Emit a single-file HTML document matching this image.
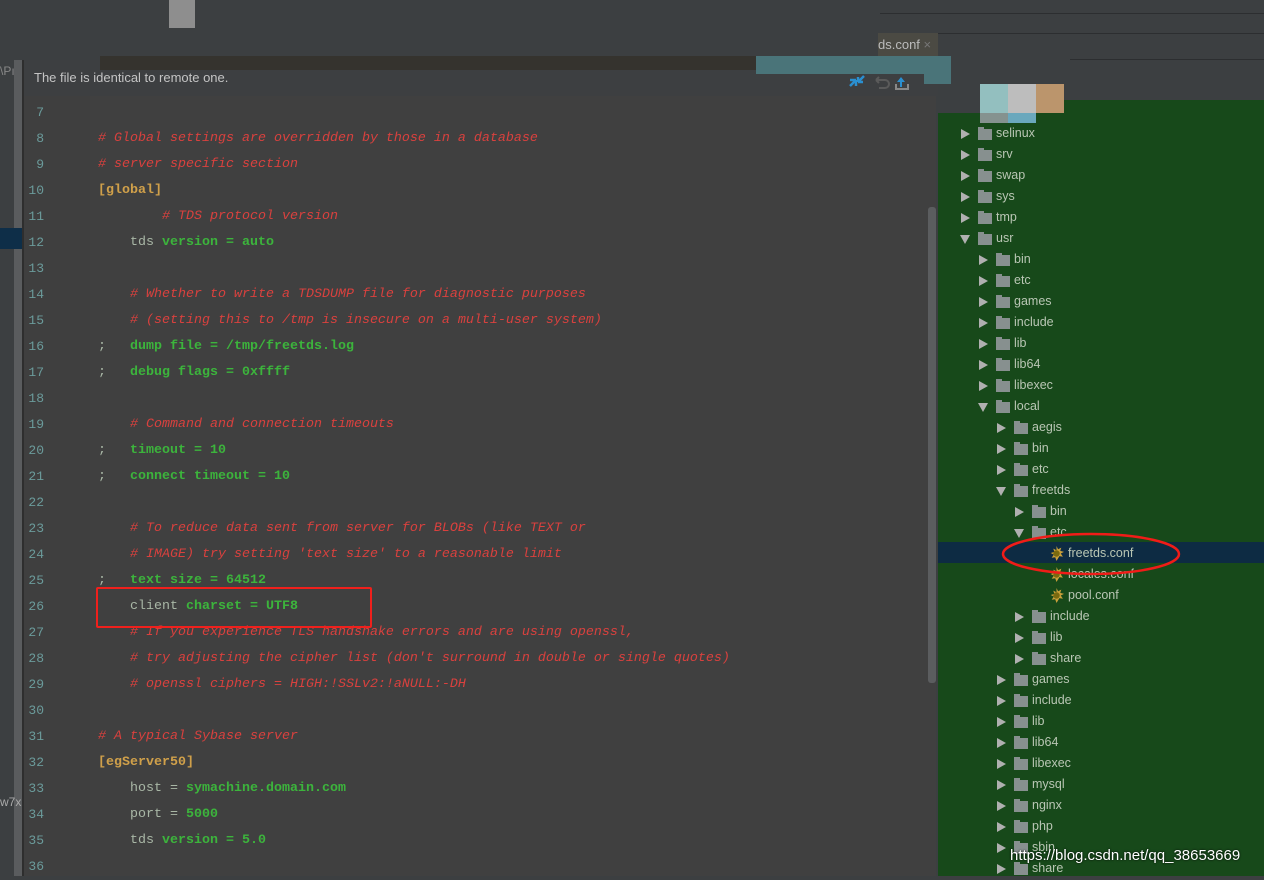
<!DOCTYPE html>
<html><head><meta charset="utf-8"><style>
body{margin:0;width:1264px;height:876px;overflow:hidden;background:#3c3f41;position:relative;font-family:"Liberation Sans",sans-serif}
.a{position:absolute}
.ln{position:absolute;left:24px;width:20px;text-align:right;font:13px "Liberation Mono",monospace;color:#6b9b9b;height:26px;line-height:26px}
.c{position:absolute;left:98px;font:13.33px "Liberation Mono",monospace;height:26px;line-height:26px;white-space:pre;color:#a9b7a6}
.r{color:#d9413e;font-style:italic}
.g{color:#3cb43c;font-weight:bold}
.k{color:#d0a04a;font-weight:bold}
.t{position:absolute;font-size:12.5px;color:#b9c6b4;height:21px;line-height:21px;white-space:nowrap}
.ar{display:inline-block;width:0;height:0;border-top:5px solid transparent;border-bottom:5px solid transparent;border-left:9px solid #b0b0b0;position:absolute;top:5px}
.ad{display:inline-block;width:0;height:0;border-left:5px solid transparent;border-right:5px solid transparent;border-top:9px solid #b0b0b0;position:absolute;top:6px}
.fo{position:absolute;top:5px;width:14px;height:11px;background:#87908f}
.fo:before{content:"";position:absolute;left:0;top:-2px;width:6px;height:2px;background:#87908f}
.gear{position:absolute;top:4px;width:15px;height:15px}
</style></head><body>
<div class="a" style="left:169px;top:0;width:26px;height:28px;background:#8e8e8e"></div>
<div class="a" style="left:880px;top:13px;width:384px;height:1px;background:#2c2e30"></div>
<div class="a" style="left:878px;top:33px;width:60px;height:24px;background:#4b4a43;color:#bbb;font-size:13px;line-height:24px">ds.conf <span style="color:#777">×</span></div>
<div class="a" style="left:938px;top:33px;width:326px;height:1px;background:#2c2e30"></div>
<div class="a" style="left:1070px;top:59px;width:194px;height:1px;background:#2c2e30"></div>
<!-- left strip -->
<div class="a" style="left:0;top:60px;width:14px;height:816px;background:#3c3f41"></div>
<div class="a" style="left:14px;top:60px;width:9px;height:816px;background:#5a5c5e"></div>
<div class="a" style="left:0;top:228px;width:23px;height:21px;background:#0e2e48"></div>
<div class="a" style="left:0;top:795px;color:#aaa;font-size:12px">w7x.</div>
<div class="a" style="left:0;top:64px;color:#888;font-size:12px">\Pı</div>
<!-- editor -->
<div class="a" style="left:24px;top:60px;width:914px;height:36px;background:#3d3f41"></div>
<div class="a" style="left:100px;top:56px;width:656px;height:14px;background:#35332e"></div>
<div class="a" style="left:756px;top:56px;width:168px;height:18px;background:#4a7479"></div>
<div class="a" style="left:924px;top:56px;width:27px;height:28px;background:#4a7479"></div>
<div class="a" style="left:34px;top:70px;color:#c4c4c4;font-size:13px">The file is identical to remote one.</div>
<svg class="a" style="left:846px;top:72px" width="70" height="20">
<path d="M4 14 L10 8 M10 8 v6 M10 8 h-6" stroke="#2a8fd0" stroke-width="2.5" fill="none"/>
<path d="M18 4 L12 10 M12 10 v-5 M12 10 h5" stroke="#2a8fd0" stroke-width="2.5" fill="none"/>
<path d="M30 8 h9 a4 4 0 0 1 0 8 h-6 M30 8 l3 -3 M30 8 l3 3" stroke="#5a5a5a" stroke-width="2" fill="none"/>
<path d="M55 5 l-4 5 h3 v5 h2 v-5 h3z" fill="#2a8fd0"/><path d="M50 12 v5 h12 v-5" stroke="#888" stroke-width="2" fill="none"/>
</svg>
<div class="a" style="left:24px;top:96px;width:914px;height:780px;background:#404040"></div>
<div class="a" style="left:24px;top:96px;width:66px;height:780px;background:#3f3f3f"></div>
<div class="a" style="left:22px;top:60px;width:2px;height:816px;background:#2e2e2e"></div>
<div class="a" style="left:928px;top:207px;width:8px;height:476px;background:#5b5d5f;border-radius:3px"></div>
<div class="a" style="left:936px;top:96px;width:2px;height:780px;background:#3c3f41"></div>
<div style="position:absolute;left:0;top:2px;width:938px;height:876px">
<div class="ln" style="top:98px">7</div>
<div class="ln" style="top:124px">8</div><div class="c r" style="top:124px"># Global settings are overridden by those in a database</div>
<div class="ln" style="top:150px">9</div><div class="c r" style="top:150px"># server specific section</div>
<div class="ln" style="top:176px">10</div><div class="c k" style="top:176px">[global]</div>
<div class="ln" style="top:202px">11</div><div class="c r" style="top:202px">        # TDS protocol version</div>
<div class="ln" style="top:228px">12</div><div class="c" style="top:228px">    tds <span class="g">version = auto</span></div>
<div class="ln" style="top:254px">13</div>
<div class="ln" style="top:280px">14</div><div class="c r" style="top:280px">    # Whether to write a TDSDUMP file for diagnostic purposes</div>
<div class="ln" style="top:306px">15</div><div class="c r" style="top:306px">    # (setting this to /tmp is insecure on a multi-user system)</div>
<div class="ln" style="top:332px">16</div><div class="c" style="top:332px">;   <span class="g">dump file = /tmp/freetds.log</span></div>
<div class="ln" style="top:358px">17</div><div class="c" style="top:358px">;   <span class="g">debug flags = 0xffff</span></div>
<div class="ln" style="top:384px">18</div>
<div class="ln" style="top:410px">19</div><div class="c r" style="top:410px">    # Command and connection timeouts</div>
<div class="ln" style="top:436px">20</div><div class="c" style="top:436px">;   <span class="g">timeout = 10</span></div>
<div class="ln" style="top:462px">21</div><div class="c" style="top:462px">;   <span class="g">connect timeout = 10</span></div>
<div class="ln" style="top:488px">22</div>
<div class="ln" style="top:514px">23</div><div class="c r" style="top:514px">    # To reduce data sent from server for BLOBs (like TEXT or</div>
<div class="ln" style="top:540px">24</div><div class="c r" style="top:540px">    # IMAGE) try setting 'text size' to a reasonable limit</div>
<div class="ln" style="top:566px">25</div><div class="c" style="top:566px">;   <span class="g">text size = 64512</span></div>
<div class="ln" style="top:592px">26</div><div class="c" style="top:592px">    client <span class="g">charset = UTF8</span></div>
<div class="ln" style="top:618px">27</div><div class="c r" style="top:618px">    # If you experience TLS handshake errors and are using openssl,</div>
<div class="ln" style="top:644px">28</div><div class="c r" style="top:644px">    # try adjusting the cipher list (don't surround in double or single quotes)</div>
<div class="ln" style="top:670px">29</div><div class="c r" style="top:670px">    # openssl ciphers = HIGH:!SSLv2:!aNULL:-DH</div>
<div class="ln" style="top:696px">30</div>
<div class="ln" style="top:722px">31</div><div class="c r" style="top:722px"># A typical Sybase server</div>
<div class="ln" style="top:748px">32</div><div class="c k" style="top:748px">[egServer50]</div>
<div class="ln" style="top:774px">33</div><div class="c" style="top:774px">    host = <span class="g">symachine.domain.com</span></div>
<div class="ln" style="top:800px">34</div><div class="c" style="top:800px">    port = <span class="g">5000</span></div>
<div class="ln" style="top:826px">35</div><div class="c" style="top:826px">    tds <span class="g">version = 5.0</span></div>
<div class="ln" style="top:852px">36</div>
</div>
<div class="a" style="left:96px;top:587px;width:272px;height:37px;border:2px solid #f0201c;border-radius:2px"></div>

<!-- right tree -->
<div class="a" style="left:938px;top:113px;width:326px;height:763px;background:#17491a"></div>
<div class="a" style="left:1064px;top:100px;width:200px;height:14px;background:#17491a"></div>
<div class="a" style="left:980px;top:84px;width:28px;height:29px;background:#93bfbf"></div>
<div class="a" style="left:1008px;top:84px;width:28px;height:29px;background:#bdbdbd"></div>
<div class="a" style="left:1036px;top:84px;width:28px;height:29px;background:#bb956c"></div>
<div class="a" style="left:980px;top:113px;width:28px;height:10px;background:#85928f"></div>
<div class="a" style="left:1008px;top:113px;width:28px;height:10px;background:#6aa8bd"></div>
<div class="a" style="left:938px;top:542px;width:326px;height:21px;background:#0d2b43"></div>
<div id="tree"></div>
<svg class="a" style="left:1000px;top:530px" width="184" height="50"><ellipse cx="91" cy="24" rx="88" ry="20" fill="none" stroke="#f01c18" stroke-width="2.5"/></svg>
<div class="a" style="left:1010px;top:847px;color:#fff;font-size:15px;text-shadow:0 0 2px #000">https://blog.csdn.net/qq_38653669</div>
<script>
var rows=[[0,'a','selinux'],[0,'a','srv'],[0,'a','swap'],[0,'a','sys'],[0,'a','tmp'],[0,'d','usr'],[1,'a','bin'],[1,'a','etc'],[1,'a','games'],[1,'a','include'],[1,'a','lib'],[1,'a','lib64'],[1,'a','libexec'],[1,'d','local'],[2,'a','aegis'],[2,'a','bin'],[2,'a','etc'],[2,'d','freetds'],[3,'a','bin'],[3,'d','etc'],[4,'f','freetds.conf'],[4,'f','locales.conf'],[4,'f','pool.conf'],[3,'a','include'],[3,'a','lib'],[3,'a','share'],[2,'a','games'],[2,'a','include'],[2,'a','lib'],[2,'a','lib64'],[2,'a','libexec'],[2,'a','mysql'],[2,'a','nginx'],[2,'a','php'],[2,'a','sbin'],[2,'a','share']];
var h='';rows.forEach(function(r,i){var y=123+i*21,x=960+r[0]*18;
if(r[1]=='f'){h+='<svg class="gear" style="left:'+(x+17)+'px;top:'+(y+3)+'px" viewBox="0 0 14 14"><path d="M7 0l1.5 3 3-1.5-1 3 3.5 1-3 1.5 2 3-3.3-.5L7 14 5.8 10.5 2.5 11l2-3L1.5 6.5l3.5-1-1-3 3 1.5z" fill="#c9a03a"/><circle cx="7" cy="7" r="3" fill="#7a6a10"/></svg><div class="t" style="left:'+(x+36)+'px;top:'+y+'px">'+r[2]+'</div>';}
else{h+='<span class="'+(r[1]=='a'?'ar':'ad')+'" style="left:'+(r[1]=='a'?x+1:x)+'px;top:'+(y+(r[1]=='a'?6:7))+'px"></span><div class="fo" style="left:'+(x+18)+'px;top:'+(y+6)+'px"></div><div class="t" style="left:'+(x+36)+'px;top:'+y+'px">'+r[2]+'</div>';}});
document.getElementById('tree').innerHTML=h;
</script>
</body></html>
